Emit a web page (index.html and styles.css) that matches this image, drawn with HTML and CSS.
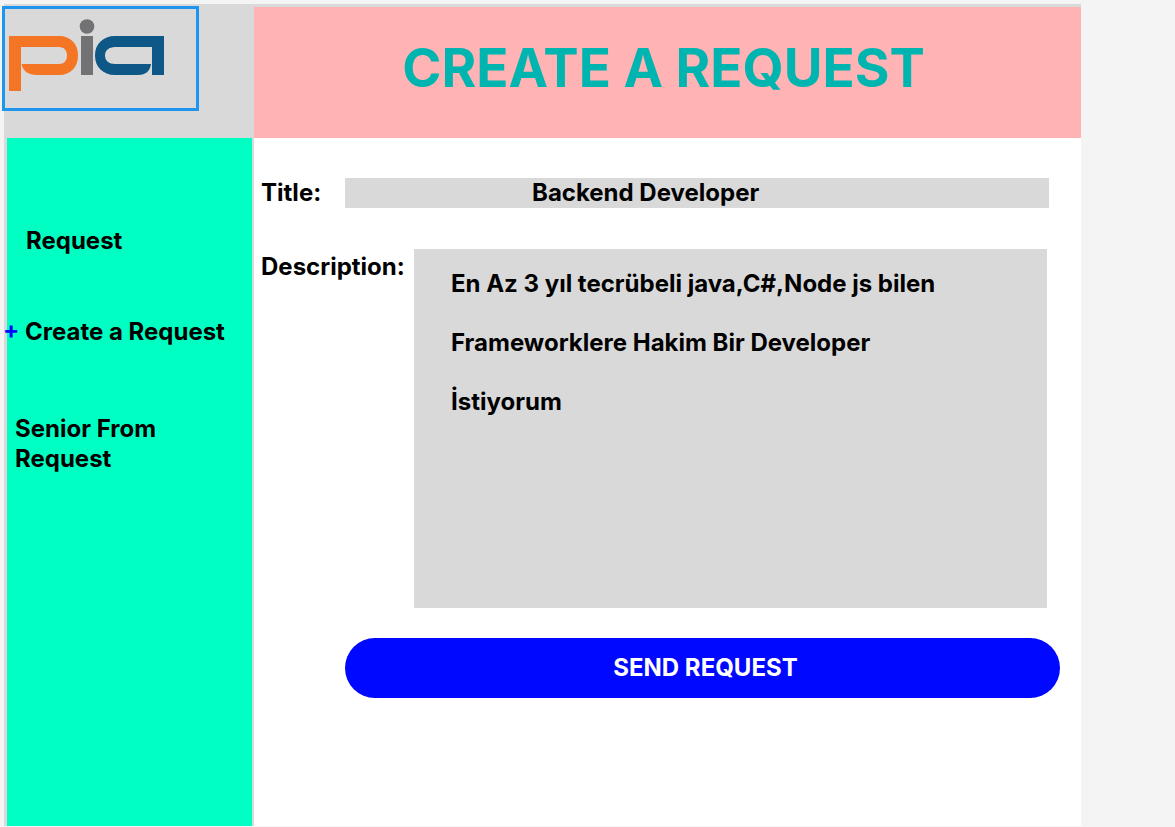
FILE: index.html
```html
<!DOCTYPE html>
<html lang="en">
<head>
<meta charset="utf-8">
<meta name="viewport" content="width=device-width, initial-scale=1">
<title>Create a Request</title>
<link rel="stylesheet" href="styles.css">
</head>
<body>
<div class="app">
  <div class="brand">
    <a class="brand-link" href="#" aria-label="pia">
      <svg class="logo" width="156" height="74" viewBox="0 0 156 74" aria-hidden="true">
        <path fill="#f47624" d="M0 17H50C62 17 69 25 69 36.500S62 56 50 56H28C19 56 14 52 12.500 45H50C55 45 58 41.500 58 36.500S55 28 50 28H12V72H0Z"/>
        <circle fill="#727274" cx="78" cy="7.500" r="7.300"/>
        <path fill="#727274" d="M72 17H84V56H72Z"/>
        <path fill="#0d5887" d="M155 17V56H143V28H106C100 28 96 31.500 96 36.500S100 45 106 45H142C141 52 137 56 129 56H106C94 56 86 48 86 36.500S94 17 106 17Z"/>
      </svg>
    </a>
  </div>
  <header class="banner"><h1 class="heading">CREATE A REQUEST</h1></header>
  <nav class="sidebar">
    <a class="nav-link nav-request" href="#">Request</a>
    <a class="nav-link nav-create" href="#"><span class="plus">+</span> Create a Request</a>
    <a class="nav-link nav-senior" href="#">Senior From Request</a>
  </nav>
  <main class="content">
    <form class="form">
      <div class="row">
        <label class="label title-label" for="title">Title:</label>
        <input class="field title-field" id="title" type="text" value="Backend Developer">
      </div>
      <div class="row description-row">
        <label class="label description-label" for="description">Description:</label>
        <textarea class="field description-field" id="description" spellcheck="false">En Az 3 yıl tecrübeli java,C#,Node js bilen
Frameworklere Hakim Bir Developer
İstiyorum</textarea>
      </div>
      <button class="send" type="button">SEND REQUEST</button>
    </form>
  </main>
</div>
</body>
</html>
```
FILE: styles.css
```css
* {
  box-sizing: border-box;
}

body {
  margin: 0;
  padding: 4px 94px 1px 4px;
  background: #f4f4f4;
  color: #000;
  font: 700 24px/30px Inter, sans-serif;
}

.app {
  display: grid;
  grid-template-columns: 250px 1fr;
  grid-template-rows: auto 1fr;
  min-height: calc(100vh - 5px);
  background: #d9d9d9;
}

.brand {
  padding-top: 2px;
}

.brand-link {
  display: block;
  width: 197px;
  height: 105px;
  margin-left: -2px;
  padding: 10px 4px;
  border: 3px solid #1e96f0;
}

.logo {
  display: block;
}

.banner {
  display: flex;
  align-items: center;
  justify-content: center;
  height: 131px;
  margin-top: 3px;
  padding: 0 8px 10px 0;
  background: #ffb3b5;
}

.heading {
  margin: 0;
  color: #00b5b0;
  font-size: 53px;
  font-weight: 700;
  line-height: 64px;
}

.sidebar {
  display: flex;
  flex-direction: column;
  margin: 0 2px 0 3px;
  padding-top: 88px;
  background: #00ffc2;
}

.nav-link {
  color: inherit;
  text-decoration: none;
}

.nav-request {
  padding-left: 19px;
}

.nav-create {
  margin: 61px 0 67px -4px;
  white-space: nowrap;
}

.nav-senior {
  width: 200px;
  padding-left: 8px;
}

.plus {
  color: #0008ff;
}

.content {
  padding: 40px 21px 40px 7px;
  background: #fff;
}

.form {
  display: flex;
  flex-direction: column;
}

.row {
  display: flex;
}

.title-label {
  width: 84px;
}

.description-row {
  margin-top: 41px;
}

.description-label {
  width: 153px;
  padding-top: 3px;
}

.field {
  flex: 1;
  min-width: 0;
  border: 0;
  border-radius: 0;
  background: #d9d9d9;
  color: inherit;
  font: inherit;
}

.title-field {
  height: 30px;
  margin-right: 11px;
  padding: 0 0 0 187px;
}

.description-field {
  height: 359px;
  margin-right: 13px;
  padding: 5px 20px 0 37px;
  line-height: 59px;
  resize: none;
}

.send {
  height: 60px;
  margin: 30px 0 0 84px;
  padding: 0 0 0 6px;
  border: 0;
  border-radius: 30px;
  background: #0008ff;
  color: #fff;
  font: inherit;
}
```
